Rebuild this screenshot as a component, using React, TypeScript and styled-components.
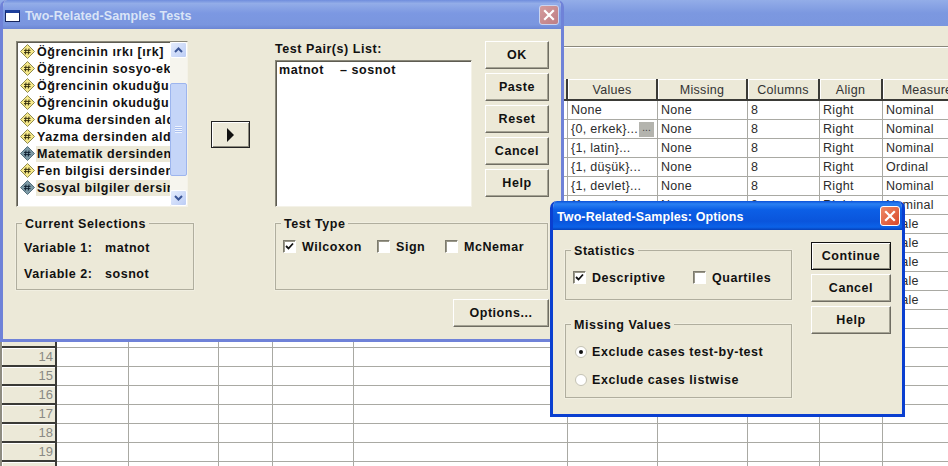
import React from 'react'
import styled, { createGlobalStyle } from 'styled-components';

const GlobalStyle = createGlobalStyle`
  html, body {
    margin: 0;
    padding: 0;
    width: 948px;
    height: 466px;
    overflow: hidden;
    background: #ece9d8;
  }
  * { box-sizing: border-box; }
`;

const Screen = styled.div`
  position: relative;
  width: 948px;
  height: 466px;
  overflow: hidden;
  display: flex;
  flex-direction: column;
  font-family: "Liberation Sans", Arial, sans-serif;
`;

// ventana de atras (editor de datos)
const AppTitle = styled.div`
  height: 26px;
  flex: none;
  background: linear-gradient(180deg, #93ade8 0%, #7c98e0 50%, #7a96df 100%);
`;

const MenuBand = styled.div`
  height: 21px;
  flex: none;
  background: #ece9d8;
  border-bottom: 1px solid #8a887c;
`;

const ToolBand = styled.div`
  height: 32px;
  flex: none;
  background: #ece9d8;
  border-top: 1px solid #fff;
`;

const Sheet = styled.div`
  flex: 1;
  display: grid;
  grid-template-columns: 2px 55px 72px 90px 54px 81px 214px 90px 90px 72px 63px 90px;
  grid-template-rows: 22px;
  grid-auto-rows: 19px;
  background: #fff;
  font-size: 12.5px;
  letter-spacing: 0.3px;
  color: #2c2c2c;
  overflow: hidden;
`;

const Edge = styled.div`
  background: #8e8c80;
`;

const HeadCell = styled.div`
  padding-top: 1px;
  background: #ece9d8;
  border-right: 2px solid #3a3a36;
  border-bottom: 2px solid #3a3a36;
  box-shadow: inset 1px 1px 0 #fff;
  display: flex;
  align-items: center;
  justify-content: center;
  white-space: nowrap;
  overflow: hidden;
  color: #333;
`;

const RowHead = styled.div`
  background: #ece9d8;
  border-right: 2px solid #3a3a36;
  border-bottom: 2px solid #3a3a36;
  box-shadow: inset 1px 1px 0 #fff;
  text-align: right;
  padding-right: 2px;
  line-height: 17px;
  font-size: 13px;
  letter-spacing: 0;
  color: #8a8a84;
`;

const Cell = styled.div`
  position: relative;
  border-right: 1px solid #a9a9a3;
  border-bottom: 1px solid #a9a9a3;
  padding: 1px 3px 0;
  line-height: 17px;
  white-space: nowrap;
  overflow: hidden;
`;

const EllipsisButton = styled.span`
  position: absolute;
  right: 3px;
  top: 2px;
  width: 15px;
  height: 15px;
  background: #b4b4ae;
  color: #444;
  font-size: 10px;
  line-height: 11px;
  letter-spacing: 0;
  text-align: center;
`;

// dialogos
const Dialog = styled.div<{ $x: number; $y: number; $w: number; $h: number; $active?: boolean }>`
  position: absolute;
  left: ${p => p.$x}px;
  top: ${p => p.$y}px;
  width: ${p => p.$w}px;
  height: ${p => p.$h}px;
  display: flex;
  flex-direction: column;
  background: #ece9d8;
  border: 3px solid ${p => (p.$active ? '#0a3fd0' : '#6f82d8')};
  border-top: 0;
  border-radius: 7px 7px 0 0;
  overflow: hidden;
  font-size: 12.5px;
  font-weight: 700;
  letter-spacing: 0.55px;
  color: #111;
`;

const TitleBar = styled.div<{ $active?: boolean }>`
  height: 29px;
  flex: none;
  margin: 0 -3px;
  padding: 2px 5px 0 ${p => (p.$active ? 7 : 5)}px;
  display: flex;
  align-items: center;
  gap: 5px;
  font-size: 12.5px;
  letter-spacing: 0.1px;
  background: ${p => p.$active
    ? 'linear-gradient(180deg, #0a50d8 0%, #2a80f2 10%, #0c5fe6 30%, #0a55dc 70%, #0b62e8 90%, #0640b8 100%)'
    : 'linear-gradient(180deg, #6f8ddd 0%, #93ade8 12%, #7c98e2 45%, #7a96df 85%, #6c86d4 100%)'};
  color: ${p => (p.$active ? '#fff' : '#d9e4f7')};
`;

const TitleIcon = styled.span`
  width: 15px;
  height: 12px;
  background: #fff;
  border: 1px solid #16255e;
  border-top: 3px solid #1d3f9c;
`;

const TitleText = styled.span`
  flex: 1;
  white-space: nowrap;
`;

const CloseButton = styled.span<{ $active?: boolean }>`
  width: 20px;
  height: 20px;
  margin-top: -2px;
  border-radius: 3px;
  border: 1px solid ${p => (p.$active ? '#fff' : '#c9d4f0')};
  background: ${p => (p.$active ? 'linear-gradient(135deg, #ee8a66, #d9482a)' : 'linear-gradient(135deg, #d59c9c, #bd7e86)')};
  display: flex;
  align-items: center;
  justify-content: center;
`;

const MainBody = styled.div`
  flex: 1;
  padding: 12px 0 0 13px;
  display: flex;
  flex-direction: column;
`;

const TopRow = styled.div`
  display: flex;
  height: 166px;
`;

const VarList = styled.div`
  width: 172px;
  height: 166px;
  display: flex;
  background: #fff;
  border: 1px solid;
  border-color: #8a887a #f4f2e8 #f4f2e8 #8a887a;
  box-shadow: inset 1px 1px 0 #5e5c52;
`;

const VarItems = styled.div`
  width: 153px;
  padding: 1px 0 0 3px;
  overflow: hidden;
`;

const VarItem = styled.div`
  height: 17px;
  display: flex;
  align-items: center;
  gap: 1px;
`;

const VarName = styled.span<{ $selected?: boolean }>`
  flex: 1;
  min-width: 0;
  line-height: 16px;
  padding-left: 1px;
  white-space: nowrap;
  overflow: hidden;
  background: ${p => (p.$selected ? '#ece9d8' : 'transparent')};
`;

const ScrollTrack = styled.div`
  width: 17px;
  display: flex;
  flex-direction: column;
  background: #f6f5ee;
`;

const ScrollArrow = styled.div`
  height: 16px;
  flex: none;
  border-radius: 2px;
  background: linear-gradient(135deg, #e4ecfc, #bccdf6);
  border: 1px solid #fff;
  display: flex;
  align-items: center;
  justify-content: center;
`;

const ScrollSpace = styled.div<{ $h: number }>`
  height: ${p => p.$h}px;
  flex: none;
`;

const ScrollThumb = styled.div`
  flex: 1;
  border-radius: 2px;
  border: 1px solid #9db5ee;
  background: #c5d5f8;
  display: flex;
  align-items: center;
  justify-content: center;
`;

const Grip = styled.span`
  width: 7px;
  height: 7px;
  background: repeating-linear-gradient(180deg, #eef3fe 0 1px, #a9bff0 1px 2px);
`;

const ArrowColumn = styled.div`
  width: 87px;
  padding: 80px 0 0 23px;
`;

const ArrowButton = styled.button`
  width: 39px;
  height: 27px;
  padding: 0;
  background: #ece9d8;
  border: 1px solid #222;
  box-shadow: inset 1px 1px 0 #fff, inset -1px -1px 0 #8d8b7e;
  display: flex;
  align-items: center;
  justify-content: center;
`;

const PairColumn = styled.div`
  width: 197px;
  display: flex;
  flex-direction: column;
`;

const FieldLabel = styled.div`
  height: 19px;
  line-height: 17px;
`;

const PairBox = styled.div`
  height: 148px;
  background: #fff;
  border: 1px solid;
  border-color: #8a887a #f4f2e8 #f4f2e8 #8a887a;
  box-shadow: inset 1px 1px 0 #5e5c52;
  padding: 1px 3px;
  line-height: 17px;
  white-space: pre;
`;

const ButtonColumn = styled.div<{ $gap: number; $left?: number }>`
  display: flex;
  flex-direction: column;
  gap: ${p => p.$gap}px;
  margin-left: ${p => p.$left ?? 0}px;
`;

const PushButton = styled.button<{ $w: number; $default?: boolean }>`
  width: ${p => p.$w}px;
  height: 28px;
  padding: 0;
  font: inherit;
  letter-spacing: inherit;
  color: #111;
  background: #ece9d8;
  border: 1px solid ${p => (p.$default ? '#111' : 'transparent')};
  border-color: ${p => (p.$default ? '#111' : '#fff #6f6d62 #6f6d62 #fff')};
  box-shadow: ${p => (p.$default
    ? 'inset 1px 1px 0 #fff, inset -1px -1px 0 #8d8b7e'
    : 'inset -1px -1px 0 #a5a394')};
`;

const BottomRow = styled.div`
  margin-top: 16px;
  display: flex;
  height: 67px;
`;

const Group = styled.div<{ $w: number; $h: number; $pad?: number }>`
  position: relative;
  width: ${p => p.$w}px;
  height: ${p => p.$h}px;
  flex: none;
  border: 1px solid #b0ae9e;
  box-shadow: 0 0 0 0.5px #f6f4ea;
  padding: ${p => p.$pad ?? 14}px 7px 0 7px;
`;

const GroupTitle = styled.span`
  position: absolute;
  left: 5px;
  top: -7px;
  padding: 0 3px;
  line-height: 15px;
  background: #ece9d8;
  white-space: nowrap;
`;

const SelectionLine = styled.div`
  display: flex;
  height: 26px;
  align-items: center;
`;

const SelectionLabel = styled.span`
  width: 81px;
`;

const GroupSpacer = styled.div`
  width: 81px;
  flex: none;
`;

const CheckRow = styled.div`
  display: flex;
  align-items: center;
  height: 17px;
`;

const CheckItem = styled.label<{ $w: number }>`
  width: ${p => p.$w}px;
  display: flex;
  align-items: center;
  gap: 6px;
  white-space: nowrap;
`;

const CheckBox = styled.span`
  width: 13px;
  height: 13px;
  flex: none;
  background: #fff;
  border: 1px solid;
  border-color: #7d7b6e #fff #fff #7d7b6e;
  box-shadow: inset 1px 1px 0 #9a988a;
  display: flex;
  align-items: center;
  justify-content: center;
`;

const OptionsRow = styled.div`
  margin-top: 9px;
  padding-left: 437px;
`;

const OptionsBody = styled.div`
  flex: 1;
  padding: 12px 0 0 12px;
  display: flex;
  gap: 19px;
`;

const GroupStack = styled.div`
  padding-top: 8px;
  display: flex;
  flex-direction: column;
  gap: 24px;
`;

const RadioRow = styled.div`
  height: 28px;
  padding-left: 2px;
  display: flex;
  align-items: center;
  gap: 5px;
  white-space: nowrap;
`;

const RadioMark = styled.span<{ $on?: boolean }>`
  width: 12px;
  height: 12px;
  flex: none;
  border-radius: 50%;
  background: #fff;
  border: 1px solid #c4c2b4;
  display: flex;
  align-items: center;
  justify-content: center;
  &::after {
    content: "";
    width: 4px;
    height: 4px;
    border-radius: 50%;
    background: ${p => (p.$on ? '#111' : 'transparent')};
  }
`;

const Close = ({ active }: { active?: boolean }) => (
  <CloseButton $active={active}>
    <svg width="12" height="12" viewBox="0 0 12 12">
      <path d="M2 2 L10 10 M10 2 L2 10" stroke="#fff" strokeWidth="2.2" strokeLinecap="square" />
    </svg>
  </CloseButton>
);

const Check = () => (
  <svg width="9" height="9" viewBox="0 0 9 9">
    <path d="M1 4 L3.5 6.5 L8 1.5" fill="none" stroke="#111" strokeWidth="1.8" />
  </svg>
);

// icono de variable numerica
const VarIcon = ({ selected }: { selected?: boolean }) => (
  <svg width="15" height="15" viewBox="0 0 15 15" style={{ flex: 'none' }}>
    <path d="M7.5 .5 L14.5 7.5 L7.5 14.5 L.5 7.5 Z"
      fill={selected ? '#7d9aa6' : '#f6e98a'} stroke={selected ? '#55707c' : '#8e8a50'} />
    <path d="M6 4.5 L5.3 10.5 M9 4.5 L8.3 10.5 M4 6.4 H10.5 M4 8.6 H10.5"
      stroke={selected ? '#123' : '#3a3410'} strokeWidth="1" fill="none" />
  </svg>
);

const columns = ['Name', 'Type', 'Width', 'Decimals', 'Label', 'Values', 'Missing', 'Columns', 'Align', 'Measure'];

const dataRows = [
  ['None', 'None', '8', 'Right', 'Nominal'],
  ['{0, erkek}...', 'None', '8', 'Right', 'Nominal'],
  ['{1, latin}...', 'None', '8', 'Right', 'Nominal'],
  ['{1, düşük}...', 'None', '8', 'Right', 'Ordinal'],
  ['{1, devlet}...', 'None', '8', 'Right', 'Nominal'],
  ['{1, evet}...', 'None', '8', 'Right', 'Nominal'],
  ['None', 'None', '8', 'Right', 'Scale'],
  ['None', 'None', '8', 'Right', 'Scale'],
  ['None', 'None', '8', 'Right', 'Scale'],
  ['None', 'None', '8', 'Right', 'Scale'],
  ['None', 'None', '8', 'Right', 'Scale'],
];

const variables = [
  { name: 'Öğrencinin ırkı [ırk]' },
  { name: 'Öğrencinin sosyo-ekonomik' },
  { name: 'Öğrencinin okuduğu okul' },
  { name: 'Öğrencinin okuduğu sınıf' },
  { name: 'Okuma dersinden aldığı' },
  { name: 'Yazma dersinden aldığı' },
  { name: 'Matematik dersinden aldığı', selected: true },
  { name: 'Fen bilgisi dersinden aldığı' },
  { name: 'Sosyal bilgiler dersinden', selected: true },
];

const rowNumbers = Array.from({ length: 20 }, (_, i) => i + 1);

export default function App() {
  return (
    <>
      <GlobalStyle />
      <Screen>
        <AppTitle />
        <MenuBand />
        <ToolBand />
        <Sheet>
          <Edge />
          <HeadCell />
          {columns.map(c => <HeadCell key={c}>{c}</HeadCell>)}
          {rowNumbers.map((n, i) => {
            const row = dataRows[i] || ['', '', '', '', ''];
            return (
              <React.Fragment key={n}>
                <Edge />
                <RowHead>{n}</RowHead>
                {columns.slice(0, 5).map(c => <Cell key={c} />)}
                {row.map((v, j) => (
                  <Cell key={j}>
                    {v}
                    {i === 1 && j === 0 && <EllipsisButton>...</EllipsisButton>}
                  </Cell>
                ))}
              </React.Fragment>
            );
          })}
        </Sheet>

        <Dialog $x={0} $y={0} $w={564} $h={342}>
          <TitleBar>
            <TitleIcon />
            <TitleText>Two-Related-Samples Tests</TitleText>
            <Close />
          </TitleBar>
          <MainBody>
            <TopRow>
              <VarList>
                <VarItems>
                  {variables.map(v => (
                    <VarItem key={v.name}>
                      <VarIcon selected={v.selected} />
                      <VarName $selected={v.selected}>{v.name}</VarName>
                    </VarItem>
                  ))}
                </VarItems>
                <ScrollTrack>
                  <ScrollArrow>
                    <svg width="9" height="6" viewBox="0 0 9 6">
                      <path d="M1 5 L4.5 1.5 L8 5" fill="none" stroke="#3a5596" strokeWidth="2" />
                    </svg>
                  </ScrollArrow>
                  <ScrollSpace $h={25} />
                  <ScrollThumb><Grip /></ScrollThumb>
                  <ScrollSpace $h={14} />
                  <ScrollArrow>
                    <svg width="9" height="6" viewBox="0 0 9 6">
                      <path d="M1 1 L4.5 4.5 L8 1" fill="none" stroke="#3a5596" strokeWidth="2" />
                    </svg>
                  </ScrollArrow>
                </ScrollTrack>
              </VarList>
              <ArrowColumn>
                <ArrowButton>
                  <svg width="9" height="14" viewBox="0 0 9 14">
                    <path d="M1 0 L8 7 L1 14 Z" fill="#111" />
                  </svg>
                </ArrowButton>
              </ArrowColumn>
              <PairColumn>
                <FieldLabel>Test Pair(s) List:</FieldLabel>
                <PairBox>{'matnot    – sosnot'}</PairBox>
              </PairColumn>
              <ButtonColumn $gap={4} $left={13}>
                <PushButton $w={64}>OK</PushButton>
                <PushButton $w={64}>Paste</PushButton>
                <PushButton $w={64}>Reset</PushButton>
                <PushButton $w={64}>Cancel</PushButton>
                <PushButton $w={64}>Help</PushButton>
              </ButtonColumn>
            </TopRow>
            <BottomRow>
              <Group $w={178} $h={67} $pad={11}>
                <GroupTitle>Current Selections</GroupTitle>
                <SelectionLine>
                  <SelectionLabel>Variable 1:</SelectionLabel>
                  <span>matnot</span>
                </SelectionLine>
                <SelectionLine>
                  <SelectionLabel>Variable 2:</SelectionLabel>
                  <span>sosnot</span>
                </SelectionLine>
              </Group>
              <GroupSpacer />
              <Group $w={273} $h={67} $pad={14}>
                <GroupTitle>Test Type</GroupTitle>
                <CheckRow>
                  <CheckItem $w={94}><CheckBox><Check /></CheckBox>Wilcoxon</CheckItem>
                  <CheckItem $w={68}><CheckBox />Sign</CheckItem>
                  <CheckItem $w={90}><CheckBox />McNemar</CheckItem>
                </CheckRow>
              </Group>
            </BottomRow>
            <OptionsRow>
              <PushButton $w={96}>Options...</PushButton>
            </OptionsRow>
          </MainBody>
        </Dialog>

        <Dialog $x={550} $y={201} $w={355} $h={216} $active>
          <TitleBar $active>
            <TitleText>Two-Related-Samples: Options</TitleText>
            <Close active />
          </TitleBar>
          <OptionsBody>
            <GroupStack>
              <Group $w={227} $h={50} $pad={18}>
                <GroupTitle>Statistics</GroupTitle>
                <CheckRow>
                  <CheckItem $w={120}><CheckBox><Check /></CheckBox>Descriptive</CheckItem>
                  <CheckItem $w={90}><CheckBox />Quartiles</CheckItem>
                </CheckRow>
              </Group>
              <Group $w={227} $h={74} $pad={13}>
                <GroupTitle>Missing Values</GroupTitle>
                <RadioRow><RadioMark $on />Exclude cases test-by-test</RadioRow>
                <RadioRow><RadioMark />Exclude cases listwise</RadioRow>
              </Group>
            </GroupStack>
            <ButtonColumn $gap={4}>
              <PushButton $w={80} $default>Continue</PushButton>
              <PushButton $w={80}>Cancel</PushButton>
              <PushButton $w={80}>Help</PushButton>
            </ButtonColumn>
          </OptionsBody>
        </Dialog>
      </Screen>
    </>
  )
}
